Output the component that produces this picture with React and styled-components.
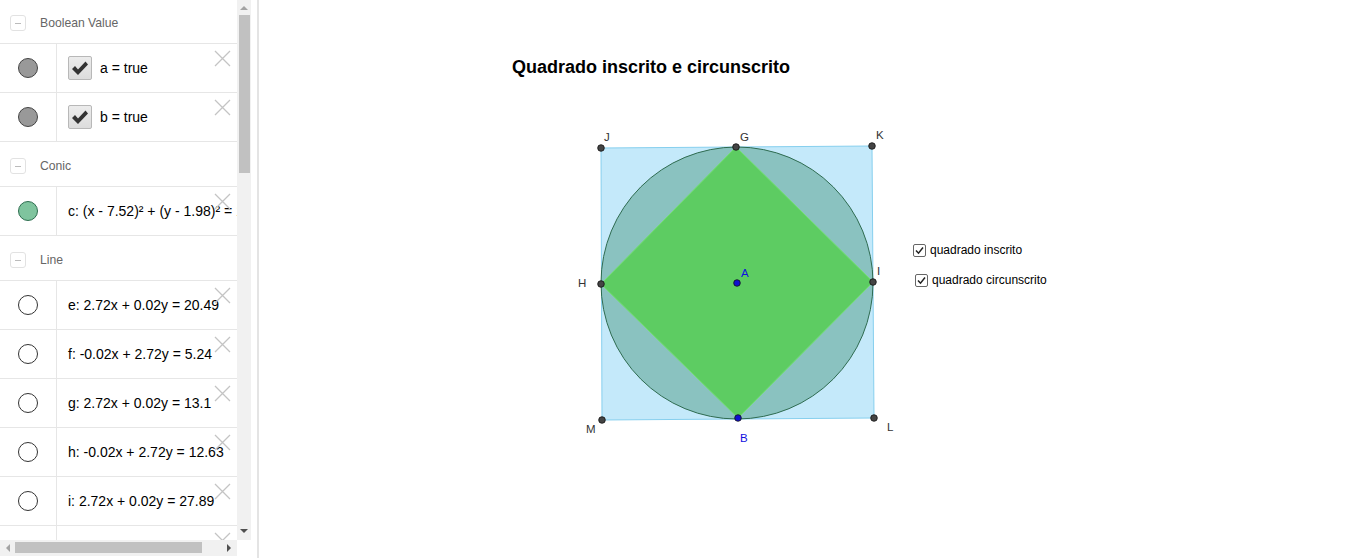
import React from 'react';
import styled, { createGlobalStyle } from 'styled-components';

const GlobalStyle = createGlobalStyle`
  html, body { margin: 0; padding: 0; background: #fff; }
  body { font-family: "Liberation Sans", Arial, sans-serif; overflow: hidden; }
`;

const Page = styled.div`
  display: flex;
  width: 1366px;
  height: 558px;
  overflow: hidden;
`;

const AlgebraPanel = styled.div`
  width: 257px;
  flex: none;
  border-right: 2px solid #e4e4e4;
  display: grid;
  grid-template-columns: 237px 14px;
  grid-template-rows: 540px 16px;
  align-content: start;
`;

const List = styled.div`
  overflow: hidden;
`;

const SectionHeader = styled.div`
  height: ${p => (p.first ? 44 : 45)}px;
  box-sizing: border-box;
  padding-top: 3px;
  border-bottom: 1px solid #e6e6e6;
  display: flex;
  align-items: center;
  padding-left: 10px;
  gap: 14px;
  font-size: 12.2px;
  color: #666;
`;

const Collapse = styled.span`
  width: 14px;
  height: 14px;
  border: 1px solid #e2e2e2;
  border-radius: 3px;
  position: relative;
  &::after {
    content: '';
    position: absolute;
    left: 4px;
    right: 4px;
    top: 7px;
    height: 1px;
    background: #bbb;
  }
`;

const ItemRow = styled.div`
  height: 48px;
  border-bottom: 1px solid #e6e6e6;
  display: flex;
  position: relative;
`;

const MarbleCell = styled.div`
  width: 56px;
  flex: none;
  border-right: 1px solid #e6e6e6;
  display: flex;
  align-items: center;
  justify-content: center;
`;

const Marble = styled.span`
  width: 18px;
  height: 18px;
  border-radius: 50%;
  border: 1px solid ${p => p.stroke};
  background: ${p => p.fill};
`;

const Content = styled.div`
  flex: 1;
  min-width: 0;
  display: flex;
  align-items: center;
  gap: 8px;
  padding-left: 11px;
  padding-bottom: 1px;
  white-space: nowrap;
  overflow: hidden;
  font-size: 14px;
  color: #000;
`;

const CheckBox = styled.span`
  width: 22px;
  height: 22px;
  flex: none;
  border: 1px solid #b8b8b8;
  border-radius: 2px;
  background: linear-gradient(#ececec, #dcdcdc);
  display: flex;
  align-items: center;
  justify-content: center;
`;

const Delete = styled.svg`
  position: absolute;
  top: 6px;
  right: 6px;
  width: 17px;
  height: 17px;
`;

const VScroll = styled.div`
  background: #f1f1f1;
  position: relative;
`;

const VThumb = styled.div`
  position: absolute;
  top: 15px;
  left: 2px;
  width: 11px;
  height: 158px;
  background: #c1c1c1;
`;

const HScroll = styled.div`
  background: #f1f1f1;
  position: relative;
`;

const HThumb = styled.div`
  position: absolute;
  left: 15px;
  top: 2px;
  width: 187px;
  height: 11px;
  background: #c1c1c1;
`;

const Arrow = styled.span`
  position: absolute;
  width: 0;
  height: 0;
  border: 4px solid transparent;
  ${p => p.dir === 'up' && 'top: 2px; left: 3px; border-bottom-color: #a3a3a3;'}
  ${p => p.dir === 'down' && 'bottom: 3px; left: 3px; border-top-color: #505050;'}
  ${p => p.dir === 'left' && 'top: 4px; left: 2px; border-right-color: #a3a3a3;'}
  ${p => p.dir === 'right' && 'top: 4px; right: 2px; border-left-color: #505050;'}
`;

const Corner = styled.div`
  background: #fff;
`;

const Canvas = styled.div`
  flex: 1;
  position: relative;
`;

const Drawing = styled.svg`
  position: absolute;
  left: 0;
  top: 0;
  width: 1106px;
  height: 558px;
`;

const Title = styled.div`
  position: absolute;
  left: 253px;
  top: 57px;
  font-family: "Liberation Sans", Arial, sans-serif;
  font-weight: bold;
  font-size: 18px;
  color: #000;
`;

const Toggle = styled.label`
  position: absolute;
  left: ${p => p.x}px;
  top: ${p => p.y}px;
  display: flex;
  align-items: center;
  gap: 4px;
  font-size: 12px;
  color: #000;
`;

const SmallBox = styled.span`
  width: 11px;
  height: 11px;
  border: 1px solid #666;
  border-radius: 2px;
  background: #fff;
  display: flex;
  align-items: center;
  justify-content: center;
`;

const Check = () => (
  <svg width="18" height="16" viewBox="0 0 18 16">
    <path d="M1 9 L4 6 L7 9.5 L14.5 1.5 L17 4.5 L7 15 Z" fill="#333" />
  </svg>
);

const SmallCheck = () => (
  <svg width="9" height="9" viewBox="0 0 9 9">
    <path d="M1 4.5 L3.5 7.2 L8 1.5" fill="none" stroke="#222" strokeWidth="1.5" />
  </svg>
);

const Cross = () => (
  <Delete viewBox="0 0 17 17">
    <path d="M1 1 L16 16 M16 1 L1 16" stroke="#c4c4c4" strokeWidth="1.3" />
  </Delete>
);

const sections = [
  {
    name: 'Boolean Value',
    items: [
      { label: 'a = true', check: true, fill: '#999', stroke: '#444' },
      { label: 'b = true', check: true, fill: '#999', stroke: '#444' },
    ],
  },
  {
    name: 'Conic',
    items: [{ label: 'c: (x - 7.52)² + (y - 1.98)² = 18.5', fill: '#7fc49e', stroke: '#2e6e50' }],
  },
  {
    name: 'Line',
    items: [
      { label: 'e: 2.72x + 0.02y = 20.49' },
      { label: 'f: -0.02x + 2.72y = 5.24' },
      { label: 'g: 2.72x + 0.02y = 13.1' },
      { label: 'h: -0.02x + 2.72y = 12.63' },
      { label: 'i: 2.72x + 0.02y = 27.89' },
      { label: 'j: -0.02x + 2.72y = 20.3' },
    ],
  },
];

const points = [
  { n: 'J', x: 601, y: 148, lx: 604, ly: 141 },
  { n: 'G', x: 736, y: 147, lx: 740, ly: 141 },
  { n: 'K', x: 872, y: 146, lx: 876, ly: 139 },
  { n: 'H', x: 601, y: 284, lx: 578, ly: 287 },
  { n: 'I', x: 873, y: 282, lx: 877, ly: 275 },
  { n: 'M', x: 602, y: 420, lx: 586, ly: 433 },
  { n: 'L', x: 874, y: 418, lx: 887, ly: 431 },
  { n: 'A', x: 737, y: 283, lx: 741, ly: 277, blue: true },
  { n: 'B', x: 738, y: 418, lx: 740, ly: 442, blue: true },
];

const App = () => (
  <>
    <GlobalStyle />
    <Page>
      <AlgebraPanel>
        <List>
          {sections.map((s, si) => (
            <React.Fragment key={s.name}>
              <SectionHeader first={si === 0}>
                <Collapse />
                {s.name}
              </SectionHeader>
              {s.items.map(it => (
                <ItemRow key={it.label}>
                  <MarbleCell>
                    <Marble fill={it.fill || '#fff'} stroke={it.stroke || '#333'} />
                  </MarbleCell>
                  <Content>
                    {it.check && (
                      <CheckBox>
                        <Check />
                      </CheckBox>
                    )}
                    {it.label}
                  </Content>
                  <Cross />
                </ItemRow>
              ))}
            </React.Fragment>
          ))}
        </List>
        <VScroll>
          <Arrow dir="up" />
          <VThumb />
          <Arrow dir="down" />
        </VScroll>
        <HScroll>
          <Arrow dir="left" />
          <HThumb />
          <Arrow dir="right" />
        </HScroll>
        <Corner />
      </AlgebraPanel>
      <Canvas>
        <Drawing viewBox="0 0 1106 558">
          <g transform="translate(-259,0)">
            <polygon points="601,148 872,146 874,418 602,420" fill="#c4e9fa" stroke="#86cfee" strokeWidth="1" />
            <circle cx="737" cy="283" r="136" fill="#8ac2c0" stroke="#2e6b50" strokeWidth="1" />
            <polygon points="736,147 873,282 738,418 601,284" fill="#5dcc62" stroke="#72e06e" strokeWidth="1" />
            {points.map(p => (
              <g key={p.n}>
                <circle cx={p.x} cy={p.y} r="3.3" fill={p.blue ? '#1010d0' : '#444'} stroke="#111" strokeWidth="0.8" />
                <text x={p.lx} y={p.ly} fontFamily="Liberation Sans, Arial, sans-serif" fontSize="11.5" fill={p.blue ? '#1010e0' : '#333'}>
                  {p.n}
                </text>
              </g>
            ))}
          </g>
        </Drawing>
        <Title>Quadrado inscrito e circunscrito</Title>
        <Toggle x={654} y={243}>
          <SmallBox>
            <SmallCheck />
          </SmallBox>
          quadrado inscrito
        </Toggle>
        <Toggle x={656} y={273}>
          <SmallBox>
            <SmallCheck />
          </SmallBox>
          quadrado circunscrito
        </Toggle>
      </Canvas>
    </Page>
  </>
);

export default App;
